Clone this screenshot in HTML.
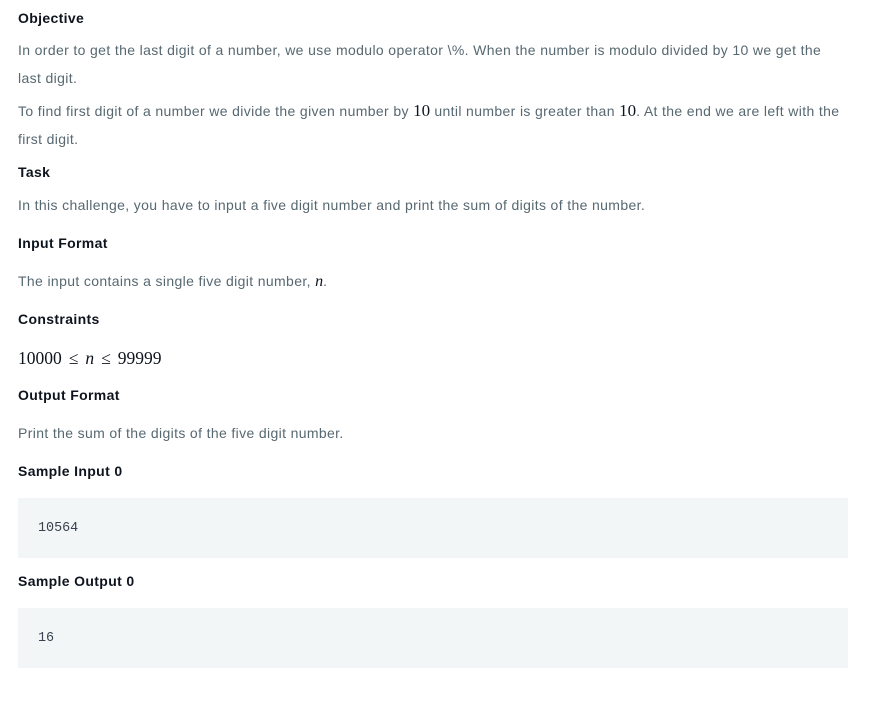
<!DOCTYPE html>
<html><head><meta charset="utf-8"><style>
body{margin:0;width:870px;height:711px;background:#fff;font-family:"Liberation Sans",sans-serif;position:relative;overflow:hidden}
.t{position:absolute;left:18px;white-space:nowrap;line-height:20px;height:20px}
.h{font-weight:bold;font-size:14px;color:#0e141e;letter-spacing:0.35px}
.p{font-size:14px;color:#576871;letter-spacing:0.36px}
.m{font-family:"Liberation Serif",serif;font-size:17px;color:#0e141e;letter-spacing:0}
.box{position:absolute;left:18px;width:830px;height:60px;background:#f2f6f7}
.box span{position:absolute;left:20px;top:21px;font-family:"Liberation Mono",monospace;font-size:13.4px;color:#39424e;line-height:20px}
.le{margin:0 7px}
</style></head><body>
<div class="t h" style="top:8px">Objective</div>
<div class="t p" style="top:40px">In order to get the last digit of a number, we use modulo operator \%. When the number is modulo divided by 10 we get the</div>
<div class="t p" style="top:68px">last digit.</div>
<div class="t p" style="top:101px">To find first digit of a number we divide the given number by <span class="m">10</span> until number is greater than <span class="m">10</span>. At the end we are left with the</div>
<div class="t p" style="top:129px">first digit.</div>
<div class="t h" style="top:162px">Task</div>
<div class="t p" style="top:195px">In this challenge, you have to input a five digit number and print the sum of digits of the number.</div>
<div class="t h" style="top:233px">Input Format</div>
<div class="t p" style="top:271px">The input contains a single five digit number, <i class="m" style="font-size:16px">n</i>.</div>
<div class="t h" style="top:309px">Constraints</div>
<div class="t m" style="top:348px;font-size:17.5px">10000<span class="le">≤</span><i>n</i><span class="le">≤</span>99999</div>
<div class="t h" style="top:385px">Output Format</div>
<div class="t p" style="top:423px">Print the sum of the digits of the five digit number.</div>
<div class="t h" style="top:461px">Sample Input 0</div>
<div class="box" style="top:498px"><span>10564</span></div>
<div class="t h" style="top:571px">Sample Output 0</div>
<div class="box" style="top:608px"><span>16</span></div>
</body></html>
